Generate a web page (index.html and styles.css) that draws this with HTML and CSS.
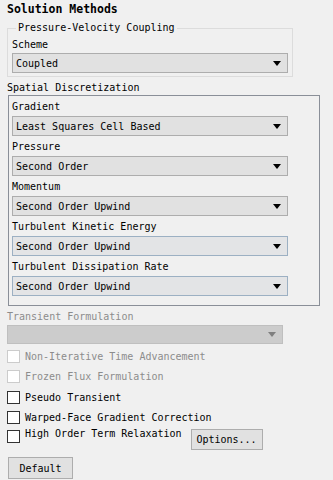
FILE: index.html
```html
<!DOCTYPE html>
<html lang="en">
<head>
    <meta charset="UTF-8">
    <title>Solution Methods</title>
    <link rel="stylesheet" href="styles.css">
</head>
<body>

<div class="panel">
    <h1>Solution Methods</h1>

    <!-- Pressure-Velocity Coupling -->
    <fieldset class="coupling">
        <legend>Pressure-Velocity Coupling</legend>
        <div class="field-label">Scheme</div>
        <div class="combo"><span>Coupled</span><i class="arrow"></i></div>
    </fieldset>

    <!-- Spatial Discretization -->
    <div class="section-label">Spatial Discretization</div>
    <div class="spatial">
        <div class="field-label">Gradient</div>
        <div class="combo"><span>Least Squares Cell Based</span><i class="arrow"></i></div>
        <div class="field-label">Pressure</div>
        <div class="combo"><span>Second Order</span><i class="arrow"></i></div>
        <div class="field-label">Momentum</div>
        <div class="combo"><span>Second Order Upwind</span><i class="arrow"></i></div>
        <div class="field-label">Turbulent Kinetic Energy</div>
        <div class="combo hot"><span>Second Order Upwind</span><i class="arrow"></i></div>
        <div class="field-label">Turbulent Dissipation Rate</div>
        <div class="combo hot"><span>Second Order Upwind</span><i class="arrow"></i></div>
    </div>

    <!-- Transient -->
    <div class="section-label disabled">Transient Formulation</div>
    <div class="combo off"><span></span><i class="arrow"></i></div>

    <div class="check-row disabled first"><span class="box"></span>Non-Iterative Time Advancement</div>
    <div class="check-row disabled"><span class="box"></span>Frozen Flux Formulation</div>
    <div class="check-row"><span class="box"></span>Pseudo Transient</div>
    <div class="check-row"><span class="box"></span>Warped-Face Gradient Correction</div>
    <div class="check-row last"><span class="box"></span>High Order Term Relaxation<button class="btn options">Options...</button></div>

    <button class="btn default">Default</button>
</div>

</body>
</html>
```

FILE: styles.css
```css
body {
    margin: 0;
    background-color: #f0f0f0;
    color: #000;
    font-family: "DejaVu Sans Mono", "Liberation Mono", "Courier New", monospace;
    font-size: 10px;
}

.panel {
    display: flex;
    flex-direction: column;
    align-items: flex-start;
    padding: 0 0 0 7px;
    width: 326px;
}

h1 {
    margin: 0;
    font-size: 11.5px;
    font-weight: bold;
    line-height: 18px;
    height: 22px;
}

/* group boxes */
.coupling {
    margin: 0;
    padding: 0 4px 3px 4px;
    width: 276px;
    border: 1px solid #dcdcdc;
}

.coupling legend {
    padding: 0 2px;
    margin-left: 4px;
    line-height: 12px;
}

.coupling .field-label {
    height: 19px;
    line-height: 21px;
}

.section-label {
    line-height: 20px;
    height: 17px;
    margin-top: 1px;
}

.spatial {
    margin-left: 1px;
    width: 307px;
    border: 1px solid #8a8f98;
    padding: 0 0 9px 3px;
}

.field-label {
    line-height: 22px;
    height: 20px;
}

/* combo boxes */
.combo {
    box-sizing: border-box;
    width: 276px;
    height: 20px;
    background-color: #e1e1e1;
    border: 1px solid #adadad;
    display: flex;
    align-items: center;
    justify-content: space-between;
    padding: 0 4px 0 3px;
}

.combo.hot {
    border-color: #9cb0c3;
    background-color: #e3e4e6;
}

.combo.off {
    width: 276px;
    height: 19px;
    background-color: #cccccc;
    border-color: #bfbfbf;
    margin-top: 1px;
}

.arrow {
    width: 0;
    height: 0;
    border-left: 4px solid transparent;
    border-right: 4px solid transparent;
    border-top: 5px solid #000;
    margin-right: 2px;
}

.combo.off .arrow {
    border-top-color: #7f7f7f;
}

.disabled {
    color: #8c8c8c;
}

/* check boxes */
.check-row {
    display: flex;
    align-items: center;
    height: 20.5px;
}

.check-row.first {
    margin-top: 2px;
}

.check-row.last {
    height: 22px;
    align-items: flex-start;
}

.check-row.last .box {
    margin-top: 2px;
}

.box {
    box-sizing: border-box;
    width: 13px;
    height: 13px;
    background-color: #fff;
    border: 1px solid #333;
    margin-right: 5px;
}

.check-row.disabled .box {
    border-color: #cccccc;
}

/* buttons */
.btn {
    font-family: inherit;
    font-size: 10px;
    color: #000;
    background-color: #e1e1e1;
    border: 1px solid #adadad;
    padding: 0;
    height: 21px;
}

.options {
    width: 72px;
    margin-left: 9px;
    margin-top: 1px;
}

.default {
    width: 65px;
    height: 22px;
    margin: 7px 0 0 1px;
}
```
